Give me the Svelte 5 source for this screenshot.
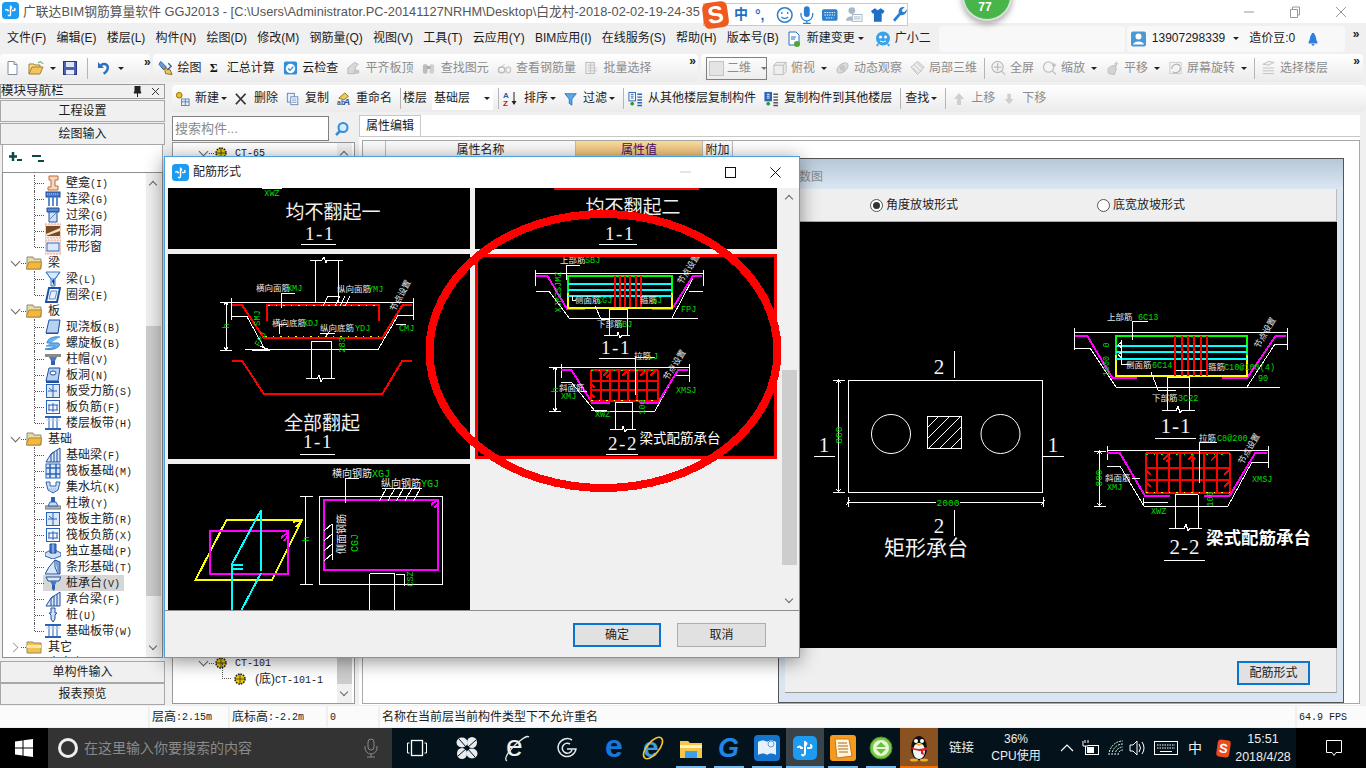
<script>
  const ICONS = {
    new: '<path d="M4 1.5h6l3 3v10H4z" fill="#fff" stroke="#7c8ea3"/><path d="M10 1.5v3h3" fill="#dfe7f0" stroke="#7c8ea3"/>',
    open: '<path d="M1 14V4h5l1 1h5v2" fill="#f7dd93" stroke="#a5802c"/><path d="M1 14l3-7h11l-3 7z" fill="#f3c55f" stroke="#a5802c"/><path d="M10 3c2-2 4-1 5 1" fill="none" stroke="#3a8a3a"/>',
    save: '<rect x="1.500" y="1.500" width="13" height="13" fill="#4c62b4" stroke="#27377c"/><rect x="4" y="2" width="8" height="5" fill="#dfe6f3"/><rect x="4" y="10" width="8" height="4.500" fill="#eef"/>',
    undo: '<path d="M4 5c5-3 9 0 7 5-1 2-2 3-4 4" fill="none" stroke="#2a6fc0" stroke-width="2.500"/><path d="M1 1.500v6.500h6.500z" fill="#2a6fc0"/>',
    draw: '<path d="M3 1l6 6-3 3-5-6z" fill="#6d9ad6" stroke="#2c5ea0"/><path d="M7 8l6 2 2 5-7-1z" fill="#e9c46a" stroke="#8a6a20"/><path d="M11 3l3 3-4 4" fill="none" stroke="#2c5ea0" stroke-width="1.500"/>',
    cloud: '<rect x="1" y="1" width="14" height="14" rx="2" fill="#2f8fdc"/><circle cx="8" cy="8.500" r="5" fill="#fff"/><path d="M5.500 8.500l2 2 3.500-4" fill="none" stroke="#2f8fdc" stroke-width="1.500"/>',
    sigma: '<text x="1" y="13" font-size="15" font-weight="700" font-family="Liberation Serif" fill="#111">Σ</text>',
    gtop: '<path d="M2 14V8l7-6 4 2-3 3v7z" fill="#d9d9d9" stroke="#b5b5b5"/><path d="M8 10h6v4H8z" fill="#c4c4c4"/>',
    gfind: '<rect x="2" y="4" width="5" height="10" rx="2" fill="#bdbdbd"/><rect x="9" y="4" width="5" height="10" rx="2" fill="#d0d0d0"/><rect x="6" y="6" width="4" height="3" fill="#aaa"/>',
    gview: '<ellipse cx="5" cy="10" rx="3.500" ry="3" fill="none" stroke="#bbb" stroke-width="1.500"/><ellipse cx="12" cy="10" rx="2.500" ry="3" fill="none" stroke="#ccc" stroke-width="1.500"/><path d="M5 7l3-3" stroke="#bbb"/>',
    gbatch: '<rect x="2" y="2" width="9" height="12" fill="#eee" stroke="#bbb"/><path d="M4 5h8M4 8h10M4 11h10M7 2v12" stroke="#c4c4c4"/>',
    top: '<path d="M2 5l3-3h10v10l-3 3H2z" fill="#eee" stroke="#bbb"/><path d="M2 5h10v10M12 5l3-3" fill="none" stroke="#bbb"/>',
    orbit: '<ellipse cx="8" cy="8" rx="7" ry="4" transform="rotate(-40 8 8)" fill="#ddd" stroke="#bbb"/><circle cx="8" cy="8" r="3" fill="#c6c6c6"/>',
    local: '<path d="M8 1l7 6-7 8-7-8z" fill="#ececec" stroke="#bbb"/><path d="M4 4l8 8M8 3l5 5M3 8l5 5" stroke="#c4c4c4"/>',
    full: '<circle cx="7" cy="7" r="6" fill="#f2f2f2" stroke="#bbb" stroke-width="1.300"/><path d="M7 3v8M3 7h8M11 11l4 4" stroke="#bbb" stroke-width="1.300"/>',
    zoom: '<circle cx="7" cy="7" r="5.500" fill="#f5f5f5" stroke="#c4c4c4" stroke-width="1.500"/><path d="M11 11l4 4M13 3v4M11 5h4" stroke="#bbb" stroke-width="1.300"/>',
    pan: '<path d="M4 14c-2-4 0-8 3-8l4-1 1 4-2 6z" fill="#d4d4d4" stroke="#bbb"/><path d="M12 1v5M10 3.500h4" stroke="#bbb"/>',
    rot: '<rect x="2" y="2" width="12" height="12" fill="#f4f4f4" stroke="#ccc"/><path d="M4 9a5 5 0 0 1 9-3M13 7a5 5 0 0 1-8 5" fill="none" stroke="#b5b5b5" stroke-width="1.300"/>',
    floor: '<path d="M2 4l6-3 6 1-6 3zM2 8h12M2 11h12M2 14h12" fill="#eee" stroke="#c0c0c0"/>',
    add: '<circle cx="4.500" cy="4" r="3" fill="#f0c020" stroke="#8a6a00"/><rect x="7" y="8" width="8" height="7" fill="#e9eff8" stroke="#5a7fb0"/><path d="M7 11h8M11 8v7" stroke="#5a7fb0"/>',
    del: '<path d="M1 2l11 12M12 2L1 14" stroke="#333" stroke-width="2"/>',
    copy: '<rect x="1.500" y="1.500" width="8" height="10" fill="#e8f0fa" stroke="#5a7fb0"/><rect x="5.500" y="5.500" width="8" height="9" fill="#fff" stroke="#5a7fb0"/><path d="M7 8h5M7 10h5M7 12h5" stroke="#7d9cc4"/>',
    ren: '<path d="M2 7l7-6 4 4-5 4z" fill="#ecc95c" stroke="#8a7020"/><text x="0" y="15" font-size="8" fill="#555" font-weight="700">ab</text><text x="7" y="15" font-size="11" font-style="italic" font-weight="700" fill="#2a5aa8">A</text>',
    sort: '<text x="0" y="7" font-size="8" font-weight="700" fill="#2a5ea8">A</text><text x="0" y="15" font-size="8" font-weight="700" fill="#b02020">Z</text><path d="M11 1v12" stroke="#222"/><path d="M8.500 10l2.500 4 2.500-4z" fill="#222"/>',
    filter: '<path d="M1 2h13L9 8v7l-3-2V8z" fill="#5fa8e8" stroke="#1f6fb8"/>',
    from: '<rect x="1" y="1" width="7" height="9" fill="#fff" stroke="#2a62b8"/><path d="M3 3h3M3 5h3M3 7h3" stroke="#2a62b8"/><path d="M4.500 11v4M2.500 13h4" stroke="#2a9a3a" stroke-width="2"/><path d="M10 3h5M10 6h5M10 9h5M10 12h5M10 15h5" stroke="#2a62b8" stroke-width="1.500"/>',
    to: '<rect x="1" y="1" width="7" height="9" fill="#2a62b8" stroke="#2a62b8"/><path d="M3 3h3M3 5h3M3 7h3" stroke="#fff"/><path d="M4.500 11v4M2.500 13h4" stroke="#2a9a3a" stroke-width="2"/><path d="M10 3h5M10 6h5M10 9h5M10 12h5M10 15h5" stroke="#555" stroke-width="1.500"/>',
    up: '<path d="M9 2L4 8h3v6h4V8h3z" fill="#cfcfcf"/>',
    down: '<path d="M7 14L2 8h3V2h4v6h3z" fill="#cfcfcf"/>',
    change: '<path d="M3 1h7l3 3v10H3z" fill="#fff" stroke="#2a6fc0"/><path d="M5 6h5M5 8h4" stroke="#2a6fc0"/><circle cx="11" cy="13" r="3" fill="#52a33a"/>',
    xiao: '<circle cx="8" cy="7.500" r="7" fill="#3aa3ea"/><circle cx="5.500" cy="6" r="1.500" fill="#fff"/><circle cx="10.500" cy="6" r="1.500" fill="#fff"/><path d="M5 10q3 2 6 0" stroke="#fff" fill="none"/><path d="M3 13l-1 2M13 13l1 2" stroke="#3aa3ea" stroke-width="2"/>',
    user: '<rect x="1" y="1" width="15" height="15" rx="2" fill="#4a98d4"/><circle cx="8.500" cy="6" r="3" fill="#fff"/><path d="M3 14c1-4 10-4 11 0z" fill="#fff"/>',
    bell: '<path d="M7 1h2l1 2c2 2 1 6 3 8v2H3v-2c2-2 1-6 3-8z" fill="#2e7ee0"/><path d="M6 14h4l-2 2z" fill="#1f5fb0"/>',
    search: '<circle cx="9" cy="6.500" r="4.500" fill="#d7ecfb" stroke="#2f8fdc" stroke-width="2"/><path d="M6 10l-4 4" stroke="#2f8fdc" stroke-width="2.500"/>',
    plus: '<path d="M5 1v9M1 5.500h8" stroke="#0a4a44" stroke-width="2.500"/><path d="M9 9h5" stroke="#0a4a44" stroke-width="2"/>',
    minus: '<path d="M1 5h9" stroke="#0a4a44" stroke-width="2"/><path d="M7 10h6" stroke="#0a4a44" stroke-width="2"/>',
    niche: '<path d="M4 1h9v4h-3v6h3v4H3v-3h3V5H4z" fill="#f6d7c0" stroke="#bd6a30"/>',
    lian: '<rect x="1" y="1" width="14" height="5" fill="#4a78c4" stroke="#1f4fa0"/><path d="M2 3h12" stroke="#bcd3ef" stroke-dasharray="1 1"/><path d="M4 6v9M12 6v9M8 6v9" stroke="#5a8ad0" stroke-width="2"/>',
    guo: '<path d="M2 1h12v4H2z" fill="#5a88cc" stroke="#1f4fa0"/><path d="M4 5h8v10H4z" fill="#cfe0f5" stroke="#1f4fa0"/><path d="M5 12l6-6" stroke="#5a88cc"/>',
    dong: '<rect x="0" y="1" width="16" height="14" fill="#f8e6de" stroke="#e0a090" stroke-dasharray="2 1"/><rect x="1" y="3" width="14" height="10" fill="#7a4a20"/><path d="M1 11l14-6v3L1 13z" fill="#f6ddc4"/>',
    chuang: '<rect x="0" y="1" width="16" height="14" fill="#f8e6de" stroke="#e0a090" stroke-dasharray="2 1"/><rect x="2" y="4" width="12" height="8" fill="#dbe8f9" stroke="#3a6ac0"/>',
    liang: '<path d="M1 1h14l-5 7v7H6V8z" fill="#d8e8fa" stroke="#3b78c8"/><path d="M1 1l5 7h4l5-7" fill="none" stroke="#3b78c8"/><path d="M7 10l2-2v6" stroke="#3b78c8"/>',
    ring: '<path d="M4 1h11l-3 14H1z" fill="#fff" stroke="#1f4fa0" stroke-width="2"/><path d="M6 4h6l-2 8H4z" fill="#e8f0fb" stroke="#5a88cc"/>',
    slab: '<path d="M4 1h11l-2 13H1z" fill="#b6d2f2" stroke="#1f4fa0"/><path d="M1 14h12l2-13v2l-2 12H1z" fill="#1f4fa0"/>',
    spiral: '<path d="M15 2C8 1 2 4 2 8h11c2 0 2 3 0 4C9 15 3 15 0 14c6-1 9-1 10-3H1" fill="#6fb3ee" stroke="#2f86d8"/>',
    cap: '<rect x="0" y="3" width="16" height="3" fill="#8a8a8a"/><path d="M4 6h8l-2 4H6z" fill="#4a78c4"/><path d="M6 10h4v4H6z" fill="#2a62b8"/>',
    hole: '<path d="M4 1h11l-2 13H1z" fill="#b6d2f2" stroke="#1f4fa0"/><ellipse cx="8" cy="6" rx="3" ry="2" fill="#fff" stroke="#1f4fa0"/><path d="M1 15h13" stroke="#1f4fa0" stroke-width="2"/>',
    rebar: '<rect x="1.500" y="1.500" width="13" height="13" fill="#dbe8f9" stroke="#2a62b8"/><path d="M8 2v12M3 8h9M4 5l4 3" stroke="#2a62b8"/>',
    neg: '<rect x="1.500" y="1.500" width="13" height="13" fill="#f2f6fd" stroke="#2a62b8"/><path d="M3 6h10M3 11h10M8 4v9M4 6v5M12 6v5" stroke="#2a62b8"/>',
    band: '<path d="M0 2h16M0 14h16" stroke="#2a62b8" stroke-width="2"/><path d="M4 3v10M8 3v10M12 3v10" stroke="#2a62b8"/><path d="M1 5h14" stroke="#bcd3ef"/>',
    fbeam: '<path d="M1 15l5-8 9-6v14z" fill="#d8e8fa" stroke="#1f4fa0"/><path d="M6 15V7l3-2v10M12 15V3" fill="none" stroke="#1f4fa0"/>',
    raft: '<rect x="1" y="1" width="14" height="14" fill="#dbe8f9" stroke="#2a62b8"/><path d="M5 1v14M11 1v14M1 5h14M1 11h14" stroke="#2a62b8" stroke-width="1.500"/>',
    pit: '<path d="M1 3h4v4h6V3h4l-2 8-5 3-5-3z" fill="#cfe0f5" stroke="#2a62b8"/><path d="M4 10h8M5 12h6" stroke="#7aa0d8" stroke-dasharray="1 1"/>',
    pier: '<path d="M0 11h16v3H0z" fill="#b5b5b5" stroke="#777"/><path d="M3 11l2-4h6l2 4z" fill="#c8daf4" stroke="#2a62b8"/><rect x="6" y="2" width="4" height="5" fill="#2a62b8"/>',
    foot: '<path d="M0 10l8-4 8 4v3l-8 3-8-3z" fill="#cfe0f5" stroke="#2a62b8"/><path d="M5 1h6v9H5z" fill="#4a78c4" stroke="#1f4fa0"/><path d="M8 1v9" stroke="#bcd3ef"/>',
    strip: '<path d="M0 15h13l-3-7V1L4 8z" fill="#d8e8fa" stroke="#1f4fa0"/><path d="M10 1l5 2v12h-2" fill="#7aa0d8" stroke="#1f4fa0"/>',
    cap2: '<path d="M1 2h15l-2 4H3z" fill="#dbe8f9" stroke="#1f4fa0"/><path d="M5 6h7l-2 4H7z" fill="#4a78c4"/><path d="M7 10h3v4l-1.500 2-1.500-2z" fill="#2a62b8"/>',
    pile: '<path d="M6 1h4v5h2l-2 2v4l-2 3-2-3V8L4 6h2z" fill="#cfe0f5" stroke="#1f4fa0"/>',
    ct: '<circle cx="8" cy="8" r="5" fill="#e8c800" stroke="#222" stroke-width="1.500" stroke-dasharray="1.600 1"/><path d="M3 8h10M8 3v10" stroke="#222" stroke-width=".7"/>',
    folder: '<path d="M1 4V2h6l1 2h7v10H1z" fill="#e9d9a6" stroke="#8f8a70"/><path d="M0 14l3-7h13l-2 7z" fill="#f5b93a" stroke="#a88a40"/>',
    folderc: '<path d="M1 3h6l1 1h7v10H1z" fill="#f5c14a" stroke="#8f8a70"/><path d="M1 6h14v3H1z" fill="#fde8a8"/>'
  };

  const row1b = [
    { i: 'draw', t: '绘图' }, { i: 'sigma', t: '汇总计算', w: 13 }, { i: 'cloud', t: '云检查' },
    { i: 'gtop', t: '平齐板顶', g: 1 }, { i: 'gfind', t: '查找图元', g: 1 }, { i: 'gview', t: '查看钢筋量', g: 1 }, { i: 'gbatch', t: '批量选择', g: 1 }
  ];
  const row1c = [
    { i: 'top', t: '俯视', g: 1, c: 1 }, { i: 'orbit', t: '动态观察', g: 1 }, { i: 'local', t: '局部三维', g: 1 }, { sep: 1 },
    { i: 'full', t: '全屏', g: 1 }, { i: 'zoom', t: '缩放', g: 1, c: 1 }, { i: 'pan', t: '平移', g: 1, c: 1 }, { i: 'rot', t: '屏幕旋转', g: 1, c: 1 }, { sep: 1 },
    { i: 'floor', t: '选择楼层', g: 1 }
  ];
  const row2a = [
    { i: 'add', t: '新建', c: 1 }, { i: 'del', t: '删除', w: 14 }, { i: 'copy', t: '复制', w: 14 }, { i: 'ren', t: '重命名', w: 14 }
  ];
  const row2b = [
    { i: 'sort', t: '排序', w: 16, c: 1 }, { i: 'filter', t: '过滤', w: 14, c: 1 }, { sep: 1 },
    { i: 'from', t: '从其他楼层复制构件' }, { i: 'to', t: '复制构件到其他楼层' }, { sep: 1 },
    { t: '查找', c: 1 }, { sep: 1 }, { i: 'up', t: '上移', w: 16, g: 1 }, { i: 'down', t: '下移', w: 14, g: 1 }
  ];
  const menus = ['文件(F)', '编辑(E)', '楼层(L)', '构件(N)', '绘图(D)', '修改(M)', '钢筋量(Q)', '视图(V)', '工具(T)', '云应用(Y)', 'BIM应用(I)', '在线服务(S)', '帮助(H)', '版本号(B)'];

  const tree = [
    { k: 'niche', t: '壁龛(I)', c: 1 }, { k: 'lian', t: '连梁(G)', c: 1 }, { k: 'guo', t: '过梁(G)', c: 1 }, { k: 'dong', t: '带形洞', c: 1 }, { k: 'chuang', t: '带形窗', c: 1, last: 1 },
    { r: 1, t: '梁' }, { k: 'liang', t: '梁(L)', c: 1 }, { k: 'ring', t: '圈梁(E)', c: 1, last: 1 },
    { r: 1, t: '板' }, { k: 'slab', t: '现浇板(B)', c: 1 }, { k: 'spiral', t: '螺旋板(B)', c: 1 }, { k: 'cap', t: '柱帽(V)', c: 1 }, { k: 'hole', t: '板洞(N)', c: 1 }, { k: 'rebar', t: '板受力筋(S)', c: 1 }, { k: 'neg', t: '板负筋(F)', c: 1 }, { k: 'band', t: '楼层板带(H)', c: 1, last: 1 },
    { r: 1, t: '基础' }, { k: 'fbeam', t: '基础梁(F)', c: 1 }, { k: 'raft', t: '筏板基础(M)', c: 1 }, { k: 'pit', t: '集水坑(K)', c: 1 }, { k: 'pier', t: '柱墩(Y)', c: 1 }, { k: 'rebar', t: '筏板主筋(R)', c: 1 }, { k: 'neg', t: '筏板负筋(X)', c: 1 }, { k: 'foot', t: '独立基础(P)', c: 1 }, { k: 'strip', t: '条形基础(T)', c: 1 }, { k: 'cap2', t: '桩承台(V)', c: 1, sel: 1 }, { k: 'fbeam', t: '承台梁(F)', c: 1 }, { k: 'pile', t: '桩(U)', c: 1 }, { k: 'band', t: '基础板带(W)', c: 1, last: 1 },
    { r: 2, t: '其它' }, { r: 2, t: '自定义' }
  ];

  const segs = (s) => s.match(/[\x00-\x7f]+|[^\x00-\x7f]+/g) ?? [];
  const isLatin = (s) => /^[\x00-\x7f]/.test(s);

  const rowTicks = (x0, y0, n, dx, dy, len = 5) => {
    let d = '';
    for (let i = 0; i < n; i++) d += `M${x0 + i * dx} ${y0 + i * dy}l-${len * 0.55} ${len}`;
    return d;
  };
  const gridD = (xs, ys) =>
    xs.map((x) => `M${x} ${ys[0]}V${ys[ys.length - 1]}`).join('') + ys.map((y) => `M${xs[0]} ${y}H${xs[xs.length - 1]}`).join('');
  const hatch = (x1, y1, x2, y2, step) => {
    let d = '';
    for (let c = x1 - (y2 - y1) + step; c < x2; c += step) {
      const a = Math.max(c, x1), b = Math.min(c + (y2 - y1), x2);
      d += `M${a} ${y2 - (a - c)}L${b} ${y2 - (b - c)}`;
    }
    return d;
  };
</script>

{#snippet icon(name, w = 15, h = 16)}
  <svg class="ic" width={w} height={h} viewBox="0 0 {Math.max(w, 16)} 16">{@html ICONS[name]}</svg>
{/snippet}

{#snippet latin(s)}
  {#each segs(s) as p}{#if isLatin(p)}<span class="m">{p}</span>{:else}{p}{/if}{/each}
{/snippet}

{#snippet tools(list)}
  {#each list as it}
    {#if it.sep}<i class="sep"></i>{:else}
      <span class="tool" class:grey={it.g}>
        {#if it.i}{@render icon(it.i, it.w ?? 15)}{/if}
        <span>{it.t}</span>
        {#if it.c}<i class="caret"></i>{/if}
      </span>
    {/if}
  {/each}
{/snippet}

{#snippet dimV(x, y1, y2)}
  <path class="w" d="M{x} {y1}V{y2}M{x - 6} {y1}h12M{x - 6} {y2}h12M{x - 2} {y1 + 3}l2-3 2 3M{x - 2} {y2 - 3}l2 3 2-3" />
{/snippet}

{#snippet appLogo()}
  <svg width="17" height="17" viewBox="0 0 24 24"><rect width="24" height="24" rx="5" fill="#1c9bf0" /><path d="M12 5v12c0 3-3 3-3 1M5 12c0-2 3-2 3 0h2M14 12h3c2 0 2-3 0-3M12 7c2-1 2 2 0 2" fill="none" stroke="#fff" stroke-width="2" /></svg>
{/snippet}

<div class="screen">
  <header class="title">
    <span class="tlogo">{@render appLogo()}</span>
    <span class="ttext">广联达BIM钢筋算量软件 GGJ2013 - [C:\Users\Administrator.PC-20141127NRHM\Desktop\白龙村-2018-02-02-19-24-35</span>
    <span class="wins">
      <svg width="12" height="12" viewBox="0 0 12 12"><path d="M1 6h10" stroke="#999" /></svg>
      <svg width="12" height="12" viewBox="0 0 12 12"><path d="M1.500 3.500h7v8h-7zM3.500 3.500v-2.500h7v8h-2" fill="none" stroke="#999" /></svg>
      <svg width="12" height="12" viewBox="0 0 12 12"><path d="M1 1l10 10M11 1L1 11" stroke="#999" /></svg>
    </span>
  </header>

  <nav class="menu">
    <div class="mitems">{#each menus as m}<span>{m}</span>{/each}</div>
    <span class="mtool">{@render icon('change', 16)}新建变更<i class="caret"></i></span>
    <span class="mtool xiao">{@render icon('xiao', 16)}广小二</span>
    <span class="mblank"></span>
    <div class="muser">
      {@render icon('user', 17, 17)}
      <span>13907298339</span><i class="caret"></i>
      <span class="dou">造价豆:0</span>
      {@render icon('bell', 14, 16)}
    </div>
    <b class="more">»</b>
  </nav>

  <div class="row1">
    <div class="bar a">
      {@render icon('new', 16)}
      {@render icon('open', 16)}
      <i class="caret"></i>
      {@render icon('save', 16)}
      <i class="sep"></i>
      {@render icon('undo', 15)}
      <i class="caret"></i>
      <b class="more">»</b>
    </div>
    <div class="bar b">
      {@render tools(row1b)}
      <b class="more">»</b>
    </div>
    <div class="bar c">
      <span class="dd"><i class="sq"></i><span>二维</span><i class="caret"></i></span>
      {@render tools(row1c)}
      <b class="more">»</b>
    </div>
  </div>

  <div class="work">
    <aside class="nav">
      <div class="navhead">
        <span>模块导航栏</span>
        <span class="navbtns">
          <svg width="9" height="11" viewBox="0 0 9 11"><path d="M2 0h5v5l1 2H1l1-2zM4.500 7v4" fill="#222" stroke="#222" /></svg>
          <svg width="9" height="9" viewBox="0 0 9 9"><path d="M1 1l7 7M8 1L1 8" stroke="#333" /></svg>
        </span>
      </div>
      <div class="navbtn">工程设置</div>
      <div class="navbtn">绘图输入</div>
      <div class="pm">{@render icon('plus', 16, 16)}{@render icon('minus', 16, 16)}</div>
      <div class="treebox">
        <div class="tree">
          {#each tree as n}
            <div class="row" class:child={n.c} class:lastc={n.last} class:root={n.r} class:sel={n.sel}>
              {#if n.r}
                <i class={n.r === 1 ? 'chev open' : 'chev closed'}></i>
                <span class="dot"></span>
                {@render icon(n.r === 1 ? 'folder' : 'folderc', 16, 16)}
                <span class="rlabel">{n.t}</span>
              {:else}
                {@render icon(n.k, 16, 16)}
                <span class="clabel">{@render latin(n.t)}</span>
              {/if}
            </div>
          {/each}
        </div>
        <div class="scroll ts">
          <i class="ar up"></i><i class="thumb"></i><i class="ar down"></i>
        </div>
      </div>
      <div class="navbtn">单构件输入</div>
      <div class="navbtn last">报表预览</div>
    </aside>

    <div class="mid">
      <div class="bar row2">
        {@render tools(row2a)}
        <i class="sep"></i>
        <span class="flo">楼层</span>
        <span class="combo">基础层<i class="caret"></i></span>
        <i class="sep"></i>
        {@render tools(row2b)}
      </div>
      <div class="midbody">
        <section class="list">
          <div class="search">
            <span class="sinput">搜索构件...</span>
            <span class="sbtn">{@render icon('search', 16)}</span>
          </div>
          <div class="listbox">
            <div class="items">
              <div class="item first"><i class="chev open"></i><span class="dot"></span>{@render icon('ct', 16)}<span class="m">CT-65</span></div>
              <div class="spacer"></div>
              <div class="item"><i class="chev open"></i><span class="dot"></span>{@render icon('ct', 16)}<span class="m">CT-101</span></div>
              <div class="item sub"><span class="elbow"></span>{@render icon('ct', 16)}<span class="subl">(底)<span class="m">CT-101-1</span></span></div>
            </div>
            <div class="scroll ls">
              <i class="ar up"></i><i class="thumb"></i><i class="ar down"></i>
            </div>
          </div>
        </section>
        <section class="props">
          <div class="tabline"><span class="tab">属性编辑</span></div>
          <div class="table">
            <div class="thead">
              <span class="th c0"></span><span class="th c1">属性名称</span><span class="th c2">属性值</span><span class="th c3">附加</span>
            </div>
          </div>
        </section>
      </div>
    </div>
  </div>

  <footer class="status">
    <span class="s0"></span>
    <span class="s1">{@render latin('层高:2.15m')}</span>
    <span class="s2">{@render latin('底标高:-2.2m')}</span>
    <span class="s3"><span class="m">0</span></span>
    <span class="s4">名称在当前层当前构件类型下不允许重名</span>
    <span class="s5"><span class="m">64.9 FPS</span></span>
  </footer>

  <div class="taskbar">
    <div class="start">
      <svg width="18" height="18" viewBox="0 0 18 18"><path d="M0 2.500l7.500-1v7H0zM8.500 1.300L18 0v8.500H8.500zM0 9.500h7.500v7l-7.500-1zM8.500 9.500H18V18l-9.500-1.300z" fill="#fff" /></svg>
    </div>
    <div class="tsearch">
      <svg width="22" height="22" viewBox="0 0 22 22"><circle cx="11" cy="11" r="8.500" fill="none" stroke="#eee" stroke-width="3" /></svg>
      <span class="tstext">在这里输入你要搜索的内容</span>
      <svg class="mic" width="14" height="20" viewBox="0 0 14 20"><rect x="4" y="1" width="6" height="11" rx="3" fill="none" stroke="#8a8a8a" /><path d="M1 8v2a6 6 0 0 0 12 0V8M7 16v3M3 19h8" fill="none" stroke="#8a8a8a" /></svg>
    </div>
    <div class="big">
      <svg width="20" height="18" viewBox="0 0 20 18"><rect x="4.500" y="1.500" width="11" height="15" fill="none" stroke="#fff" stroke-width="1.300" /><path d="M2.500 4H.5v10h2M17.500 4h2v10h-2" fill="none" stroke="#fff" /></svg>
    </div>
    <div class="big">
      <svg width="24" height="24" viewBox="0 0 24 24"><g fill="#e8ecee"><ellipse cx="7" cy="6.500" rx="5.500" ry="5" /><ellipse cx="17" cy="6.500" rx="5" ry="5.500" /><ellipse cx="7" cy="17.500" rx="5" ry="5.500" /><ellipse cx="17" cy="17.500" rx="5.500" ry="5" /></g><circle cx="12" cy="12" r="2" fill="#04141c" /><path d="M12 12L4 3M12 12l9-8M12 12l-9 8M12 12l8 9" stroke="#04141c" /></svg>
    </div>
    <div class="big">
      <svg width="28" height="30" viewBox="0 0 28 30"><text x="3" y="23" font-size="30" font-family="Liberation Sans" fill="#f0f0f0">e</text><path d="M4 28c-4-2 2-10 9-17 7-6 11-9 13-7" fill="none" stroke="#dfe6ea" stroke-width="1.300" /></svg>
    </div>
    <div class="big">
      <svg width="22" height="22" viewBox="0 0 22 22"><path d="M16 3A9 9 0 1 0 20 12H11M14 7a5 5 0 1 0 2 6" fill="none" stroke="#e6eaec" stroke-width="1.500" /></svg>
    </div>
    <div class="apps">
      <span class="app"><svg width="30" height="30" viewBox="0 0 30 30"><text x="5" y="24" font-size="32" font-weight="700" font-family="Liberation Sans" fill="#1976d9">e</text></svg></span>
      <span class="app"><svg width="30" height="30" viewBox="0 0 30 30"><text x="5" y="24" font-size="28" font-weight="700" font-family="Liberation Sans" fill="#3b9be5">e</text><ellipse cx="15" cy="15" rx="13" ry="6" transform="rotate(-50 15 15)" fill="none" stroke="#f3c72e" stroke-width="1.600" /></svg></span>
      <span class="app on"><svg width="24" height="22" viewBox="0 0 24 22"><path d="M1 4h8l2 2h12v15H1z" fill="#f4c649" /><path d="M1 8h22v3H1z" fill="#fff3c4" /><rect x="6" y="14" width="12" height="7" fill="#3aa0e8" /></svg></span>
      <span class="app on"><svg width="28" height="30" viewBox="0 0 28 30"><text x="3" y="24" font-size="27" font-style="italic" font-weight="700" font-family="Liberation Sans" fill="#1d86ea">G</text></svg></span>
      <span class="app on"><svg width="26" height="26" viewBox="0 0 26 26"><rect width="26" height="26" rx="4" fill="#1574cc" /><path d="M4 7c3-2 7-2 9 0 2-2 6-2 9 0v13c-3-2-7-2-9 0-2-2-6-2-9 0z" fill="#e6f1fb" /><circle cx="17" cy="9" r="3" fill="none" stroke="#5fa0e0" /></svg></span>
      <span class="app active on"><svg width="24" height="24" viewBox="0 0 24 24"><rect width="24" height="24" rx="5" fill="#1c9bf0" /><path d="M12 5v12c0 3-3 3-3 1M5 12c0-2 3-2 3 0h2M14 12h3c2 0 2-3 0-3M12 7c2-1 2 2 0 2" fill="none" stroke="#fff" stroke-width="2" /></svg></span>
      <span class="app on"><svg width="26" height="26" viewBox="0 0 26 26"><rect width="26" height="26" rx="3" fill="#f59a1c" /><path d="M5 4h14l3 17-15 2z" fill="#fff6df" stroke="#c8761a" /><path d="M8 8h9M8 11h10M8 14h10M9 17h9" stroke="#b0641a" /></svg></span>
      <span class="app on"><svg width="26" height="28" viewBox="0 0 26 28"><circle cx="13" cy="14" r="11" fill="#7ac84a" stroke="#3a8a20" /><ellipse cx="13" cy="14" rx="8" ry="8" fill="#eaf6d8" /><path d="M8 13h10l-5-5zM8 15h10l-5 5z" fill="#6abf3c" /></svg></span>
      <span class="app qq"><svg width="22" height="28" viewBox="0 0 22 28"><ellipse cx="11" cy="14" rx="8" ry="12" fill="#111" /><ellipse cx="11" cy="17" rx="6" ry="8" fill="#f5f5f5" /><circle cx="8" cy="7" r="2" fill="#fff" /><circle cx="14" cy="7" r="2" fill="#fff" /><path d="M7 10h8l-4 2z" fill="#f0b020" /><path d="M3 13q8 4 16 0l1 2q-3 2-5 2l1 4-3-1v-3q-3 0-9-2z" fill="#d8202a" /><ellipse cx="6" cy="26" rx="4" ry="1.500" fill="#f0b020" /><ellipse cx="16" cy="26" rx="4" ry="1.500" fill="#f0b020" /></svg></span>
    </div>
    <span class="link">链接</span>
    <div class="cpu"><span>36%</span><span>CPU使用</span></div>
    <div class="tray">
      <svg width="14" height="14" viewBox="0 0 14 14"><path d="M1 10l6-6 6 6" fill="none" stroke="#fff" stroke-width="1.200" /></svg>
      <svg width="18" height="16" viewBox="0 0 18 16"><rect x="3.500" y="5.500" width="13" height="9" fill="none" stroke="#fff" /><rect x="5" y="7" width="7" height="6" fill="#fff" /><path d="M1 1v5h5M3 0v3M6 0v3" stroke="#fff" /></svg>
      <svg width="18" height="16" viewBox="0 0 18 16"><path d="M1 15A14 14 0 0 1 15 1M4 15A11 11 0 0 1 15 4M7 15A8 8 0 0 1 15 7M10 15A5 5 0 0 1 15 10" fill="none" stroke="#dfe" stroke-dasharray="2 1" /></svg>
      <svg class="vol" width="18" height="16" viewBox="0 0 18 16"><path d="M1 5h3l4-4v14l-4-4H1zM10 4q3 4 0 8M13 2q4 6 0 12" fill="none" stroke="#fff" /></svg>
      <svg class="kbd" width="24" height="14" viewBox="0 0 24 14"><rect x=".5" y=".5" width="23" height="13" fill="none" stroke="#fff" /><path d="M3 4h18M3 7h18" stroke="#fff" stroke-dasharray="1.500 1" /><path d="M6 10.500h12" stroke="#fff" /></svg>
      <span class="zh">中</span>
      <span class="tS">S</span>
    </div>
    <div class="clock"><span>15:51</span><span>2018/4/28</span></div>
    <div class="notify">
      <svg width="16" height="17" viewBox="0 0 16 17"><path d="M.5.500h15v12H10l-2 3-2-3H.5z" fill="none" stroke="#fff" /></svg>
    </div>
  </div>

  <!-- property-drawing window behind the dialog -->
  <div class="back">
    <div class="btitle"><span>数图</span></div>
    <div class="binner">
      <div class="radios">
        <span class="radio on"><i></i>角度放坡形式</span>
        <span class="radio"><i></i>底宽放坡形式</span>
      </div>
      <svg class="cad" width="552" height="426" viewBox="785 222 552 426" shape-rendering="crispEdges">
        <rect class="w" x="848.500" y="380.500" width="194" height="112" />
        <circle class="w geo" cx="891" cy="434" r="19.500" />
        <circle class="w geo" cx="1000.500" cy="434" r="19.500" />
        <rect class="w" x="927.500" y="416.500" width="34" height="32" />
        <path class="w" d={hatch(927.5, 416.5, 961.5, 448.5, 11)} />
        {@render dimV(838.5, 380, 492)}
        <text class="gt r" transform="translate(842 435) rotate(-90)" text-anchor="middle">800</text>
        <path class="w" d="M848.500 502.500H1043.500M848.500 497v10M1043.500 497v10M846 505l4-5M1041 505l4-5" />
        <rect x="936" y="498" width="24" height="9" fill="#000" />
        <text class="gt r" x="948" y="506" text-anchor="middle">2000</text>
        <text class="num" x="824" y="452" text-anchor="middle">1</text>
        <path class="w" d="M814 456.500h21M1043 456.500h21" />
        <text class="num" x="1053" y="452" text-anchor="middle">1</text>
        <text class="num" x="939" y="374" text-anchor="middle">2</text>
        <path class="w" d="M954.500 351v27M954.500 510v26" />
        <text class="num" x="939" y="533" text-anchor="middle">2</text>
        <text class="big-t" x="926" y="555" text-anchor="middle">矩形承台</text>

        <path class="w" d="M1074.500 332.500H1287.500M1074.500 328v22M1287.500 328v22M1075 348h15l26 39H1280M1247 387l28-43h12" />
        <path class="w" d="M1167.500 377v33M1189.500 377v33M1162 410.500h14l2-4 2 6 2-2h13M1167.500 377.500h22" />
        <polyline class="mg" points="1075,335.500 1087,335.500 1112,377.500 1137,377.500" />
        <polyline class="mg" points="1222,377.500 1247.500,377.500 1276,335.500 1286,335.500" />
        <polyline class="gn" points="1116,355 1116,335.500 1247,335.500 1247,355" />
        <polyline class="yl" points="1116,355 1116,375.500 1247,375.500 1247,355" />
        <path class="cy" d="M1116 345.500h131M1116 351.500h131M1116 358.500h131" />
        <path class="rd" d="M1175 336v40M1181.500 336v40M1188 336v40M1194 336v40M1201 336v40M1207 336v40" />
        <path class="w" d="M1148 321.500h-16v18M1121 340v24h10M1122 342l-4 3 4 3M1122 352l-4 3 4 3M1151 372l7 18h18M1176 370h30" />
        <text class="lb" x="1107" y="320">上部筋</text><text class="gt" x="1138" y="320">6C13</text>
        <text class="lb" x="1126" y="368">侧面筋</text><text class="gt" x="1152" y="368">6C14</text>
        <text class="lb" x="1208" y="370">箍筋</text><text class="gt" x="1224" y="370">C10@100(4)</text>
        <text class="lb" x="1152" y="401">下部筋</text><text class="gt" x="1178" y="401">3C22</text>
        <text class="gt" x="1258" y="381">90</text>
        <text class="gt" transform="translate(1109 345) rotate(-90)" text-anchor="middle">0</text>
        <text class="gt" transform="translate(1109 366) rotate(-90)" text-anchor="middle">1000</text>
        <text class="lb" transform="translate(1259 349) rotate(-60)">节点设置</text>
        <text class="num sp" x="1176" y="433" text-anchor="middle">1-1</text>
        <path class="w" d="M1155 438.500h41" />

        <path class="w" d="M1107 450.500H1269M1107 446v14M1268 446v22M1107 466h13l24 40H1228l24-44h17" />
        {@render dimV(1099.5, 451, 506)}
        <text class="gt r" transform="translate(1102 478) rotate(-90)" text-anchor="middle">800</text>
        <path class="w" d="M1175.500 495v33M1198.500 495v33M1169 528.500h15l2-4 2 6 2-2h12M1175 494.500h23" />
        <polyline class="mg" points="1107,452.500 1119.500,452.500 1145,496 1170,496" />
        <polyline class="mg" points="1204,496 1229.500,496 1255.500,452.500 1267,452.500" />
        <path class="rd" d={gridD([1146, 1157, 1169, 1180, 1193, 1204, 1217, 1229.5], [453, 468, 480, 493])} />
        <path class="rd thin" d="M1163 460l5-5M1166 462l4-4M1188 460l5-5M1191 462l4-4M1211 460l6-5M1146 470l5 5M1146 482l5 5M1229 470l-5 5M1229 482l-5 5" />
        <path class="yl dots" d="M1146 492H1230" />
        <path class="gn dots" d="M1146 454H1230" />
        <path class="w" d="M1217 442.500h-17.500V483M1132 478h8M1143 502h25M1143 498v8" />
        <text class="lb" x="1199" y="441">拉筋</text><text class="gt" x="1217" y="441">C8@200</text>
        <text class="lb" x="1105" y="481">斜面筋</text><text class="gt" x="1107" y="490">XMJ</text>
        <text class="gt" x="1252" y="482">XMSJ</text><text class="gt" x="1151" y="514">XWZ</text>
        <text class="gt" transform="translate(1213 499) rotate(-90)" text-anchor="middle">100</text>
        <text class="lb" transform="translate(1243 465) rotate(-60)">节点设置</text>
        <text class="num sp" x="1185" y="554" text-anchor="middle">2-2</text>
        <path class="w" d="M1164 560.500h41" />
        <text class="cap-t" x="1258.500" y="544" text-anchor="middle">梁式配筋承台</text>
      </svg>
      <div class="bfoot"><span class="btn primary">配筋形式</span></div>
    </div>
  </div>

  <!-- 配筋形式 dialog -->
  <div class="dialog">
    <div class="dtitle">
      <span class="dlogo">{@render appLogo()}</span>
      <span>配筋形式</span>
      <span class="dwins">
        <svg width="14" height="12" viewBox="0 0 14 12"><path d="M1 6h11" stroke="#ccc" /></svg>
        <svg width="11" height="11" viewBox="0 0 11 11"><rect x=".5" y=".5" width="10" height="10" fill="none" stroke="#111" /></svg>
        <svg class="dclose" width="11" height="11" viewBox="0 0 11 11"><path d="M.5.500l10 10M10.500.500l-10 10" stroke="#111" /></svg>
      </span>
    </div>
    <div class="dbody">
      <div class="cards">
        <svg class="card" width="302" height="61" viewBox="168 188 302 61" shape-rendering="crispEdges">
          <path class="w" d="M262 188h20" />
          <text class="gt" x="272" y="196" text-anchor="middle">XWZ</text>
          <text class="t18" x="333" y="219" text-anchor="middle">均不翻起一</text>
          <text class="n18" x="320" y="240" text-anchor="middle">1-1</text>
          <path class="w" d="M301 244.500h35" />
        </svg>
        <svg class="card" width="302" height="61" viewBox="475 188 302 61" shape-rendering="crispEdges">
          <path class="rd" d="M555 188v1h143v-1" />
          <text class="t18" x="633" y="214" text-anchor="middle">均不翻起二</text>
          <text class="n18" x="620" y="240" text-anchor="middle">1-1</text>
          <path class="w" d="M599 244.500h38" />
        </svg>

        <svg class="card" width="302" height="205" viewBox="168 254 302 205" shape-rendering="crispEdges">
          <path class="w" d="M315 302V260M338 302V260M310 260h12l2-3 2 6 1-3h16M231.500 302.500H413.500M231.500 298v22M413.500 298v22" />
          {@render dimV(226, 302, 350)}
          <text class="gt" transform="translate(229 326) rotate(-90)" text-anchor="middle">h</text>
          <path class="w" d="M232 316.500h15l18 33H378l20-34 15 .5M245 349.500H378" />
          <polyline class="rd" points="232,305 242,305 263.500,337.500 382.500,337.500 402.500,305 412,305" />
          <polyline class="rd" points="267,321 267,305 379,305 379,321" />
          <path class="yl dots" d="M268 305.500H378M265 336.500H382" />
          <path class="w" d="M311.500 341v37M331 341v37M311 341.500h20M306 378.500h11l2-3 2 6 2-3h12" />
          <polyline class="rd" points="232,360.500 242,360.500 263.500,393.500 382.500,393.500 402.500,360.500 412,360.500" />
          <path class="w" d="M295 293h-14v15M287 324h-8v10M340 296h-12l-5 10M340 296l-5 10M345 296l-5 10M350 296l-5 10M335 333h-15M330 331l-5 6" />
          <path class="w" d="M260 346l10 4h-18M396 324h10" />
          <text class="lb" x="256" y="291">横向面筋</text><text class="gt" x="287" y="291">XMJ</text>
          <text class="lb" x="337" y="292">纵向面筋</text><text class="gt" x="368" y="292">YMJ</text>
          <text class="lb" x="272" y="326">横向底筋</text><text class="gt" x="303" y="326">XDJ</text>
          <text class="lb" x="320" y="331">纵向底筋</text><text class="gt" x="355" y="331">YDJ</text>
          <text class="gt" x="399" y="331">CMJ</text>
          <text class="gt" transform="translate(259 347) rotate(-60)">FPJ</text>
          <text class="gt" transform="translate(260 318) rotate(-90)" text-anchor="middle">SMJ</text>
          <text class="gt" transform="translate(345 345) rotate(-90)" text-anchor="middle">283</text>
          <text class="lb" transform="translate(395 312) rotate(-62)">节点设置</text>
          <text class="t18" x="322" y="430" text-anchor="middle">全部翻起</text>
          <text class="n18" x="318" y="448" text-anchor="middle">1-1</text>
          <path class="w" d="M300 454.500h35" />
        </svg>

        <div class="picked">
          <svg width="296" height="199" viewBox="478 257 296 199" shape-rendering="crispEdges">
            <path class="w" d="M535 273.500H703M535 270v16M703 270v16M536 291h13l20 27H698M672 318l21-40M703 291h-14" />
            <polyline class="mg" points="536,276 547.500,276 567,309 585,309" />
            <polyline class="mg" points="652,309 672,309 693,276 702,276" />
            <polyline class="gn" points="568,293 568,276 672,276 672,293" />
            <polyline class="yl" points="568,293 568,308 672,308 672,293" />
            <path class="cy" d="M568 283.500h104M568 289.500h104M568 295.500h104" />
            <path class="rd" d="M614.500 276v31M620 276v31M625 276v31M630 276v31M636 276v31M641 276v31" />
            <path class="w" d="M609.500 309v26M627 309v26M604 335.500h13l1-3 2 5 2-2h8M609 309.500h18M580 265h-14v15M572 296v4h4M595 306l6 13h8" />
            <text class="lb" x="560" y="263">上部筋</text><text class="gt" x="585" y="263">SBJ</text>
            <text class="lb" x="575" y="303">侧面筋</text><text class="gt" x="597" y="303">CGJ</text>
            <text class="lb" x="640" y="303">箍筋</text><text class="gt" x="652" y="303">GJ</text>
            <text class="lb" x="597" y="327">下部筋</text><text class="gt" x="617" y="327">XBJ</text>
            <text class="gt" x="681" y="312">FPJ</text>
            <text class="gt" transform="translate(561 292) rotate(-90)" text-anchor="middle">XJMZSJMZ</text>
            <text class="lb" transform="translate(682 285) rotate(-58)">节点设置</text>
            <text class="n18" x="616" y="354" text-anchor="middle">1-1</text>
            <path class="w" d="M599 358.500h37" />

            <path class="w" d="M561 367.500H689M561 364v14M689 364v18M561 382h10l24 29H655l20-36h14M555 367.500h0" />
            {@render dimV(555, 367, 411)}
            <text class="gt" transform="translate(558 390) rotate(-90)" text-anchor="middle">h</text>
            <polyline class="mg" points="561,369.500 571,369.500 592,402.500 610,402.500" />
            <polyline class="mg" points="640,402.500 658,402.500 678.500,369.500 688,369.500" />
            <path class="rd" d={gridD([591, 601, 609.5, 618.5, 627.5, 637, 647, 657.500], [369.5, 381, 390, 401])} />
            <path class="rd thin" d="M603 376l5-5M606 378l4-4M622 376l5-5M640 376l5-5M650 376l5-5M591 384l4 4M591 394l4 4" />
            <path class="w" d="M615.500 402v27M632.500 402v27M610 429.500h12l1-3 2 5 2-2h9M615 402.500h18M655 357h-20v38M581 391h6M591 410h16" />
            <path class="yl dots" d="M591 400H657" />
            <path class="gn dots" d="M591 370H657" />
            <text class="lb" x="634" y="359">拉筋</text><text class="gt" x="648" y="359">LJ</text>
            <text class="lb" x="559" y="391">斜面筋</text><text class="gt" x="561" y="399">XMJ</text>
            <text class="gt" x="676" y="393">XMSJ</text><text class="gt" x="595" y="417">XWZ</text>
            <text class="gt" transform="translate(645 407) rotate(-90)" text-anchor="middle">100</text>
            <text class="lb" transform="translate(668 381) rotate(-58)">节点设置</text>
            <text class="n18" x="623" y="450" text-anchor="middle">2-2</text>
            <path class="w" d="M606 454.500h32" />
            <text class="cap-s" x="680" y="443" text-anchor="middle">梁式配筋承台</text>
          </svg>
        </div>

        <svg class="card" width="302" height="146" viewBox="168 464 302 146" shape-rendering="crispEdges">
          <polygon class="yl" points="226.500,520 302,520 272,580 195.500,580" />
          <rect class="mg" x="210" y="531" width="78" height="43" />
          <path class="mg" d="M281 538l7-6M284 541l4-5" />
          <path class="yl" d="M293 522l9-2M296 527l6-7" />
          <path class="cy" d="M261 510V571M261 510L231.500 565V610M231.500 565h11M231.500 569h11M261 573L241.500 610" />
          <path class="w" d="M305.500 496V584M300 496.500h13M300 584.500h13" />
          <text class="gt" transform="translate(309 539) rotate(-90)" text-anchor="middle">h</text>
          <rect class="w" x="319.500" y="496.500" width="123" height="88" />
          <rect class="mg" x="324" y="500" width="114" height="70" />
          <path class="w" d="M369.500 573.500V610M394.500 573.500V610M369.500 573.500h25" />
          <path class="w" d="M359 478.500h-14V503" />
          <path class="w" d="M381.500 488.500h40" />
          <path class="w" d={rowTicks(386, 489, 5, 8.5, 0, 12)} />
          <path class="w" d="M332 524v36M324 531l8-7M324 541l8-7M324 551l8-7M324 561l8-7" />
          <path class="mg" d="M431 505l6-5M434 508l4-4" />
          <path class="w" d="M404 574h-8M404 574v12" />
          <text class="lb11" x="332" y="477">横向钢筋</text><text class="gt11" x="372" y="477">XGJ</text>
          <text class="lb11" x="381" y="487">纵向钢筋</text><text class="gt11" x="421" y="487">YGJ</text>
          <text class="lb11" transform="translate(345 534) rotate(-90)" text-anchor="middle">侧面钢筋</text>
          <text class="gt11" transform="translate(358 543) rotate(-90)" text-anchor="middle">CGJ</text>
          <text class="gt" transform="translate(413 579) rotate(-90)" text-anchor="middle">CSZ</text>
        </svg>
      </div>
      <div class="scroll ds">
        <i class="ar up"></i><i class="thumb"></i><i class="ar down"></i>
      </div>
    </div>
    <div class="dfoot">
      <span class="btn primary ok">确定</span>
      <span class="btn cancel">取消</span>
    </div>
  </div>

  <svg class="circle" width="1366" height="768" viewBox="0 0 1366 768" shape-rendering="crispEdges">
    <ellipse cx="603.500" cy="351" rx="174" ry="137" fill="none" stroke="#f00" stroke-width="8" />
  </svg>

  <div class="badge"><span>77</span></div>

  <div class="sogou">
    <span class="slogo">S</span>
    <b class="szh">中</b>
    <span class="spunct">°,</span>
    <svg width="18" height="18" viewBox="0 0 18 18"><circle cx="9" cy="9" r="7.500" fill="#fff" stroke="#2a7fd0" stroke-width="1.600" /><path d="M6 6v2M12 6v2M5.500 11q3.500 3 7 0" fill="none" stroke="#2a7fd0" stroke-width="1.300" /></svg>
    <svg width="14" height="18" viewBox="0 0 14 18"><rect x="4" y="0" width="6" height="11" rx="3" fill="#2a7fd0" /><path d="M1 7v2a6 6 0 0 0 12 0V7M7 15v2M3 17.500h8" fill="none" stroke="#2a7fd0" stroke-width="1.300" /></svg>
    <svg width="18" height="16" viewBox="0 0 18 16"><rect x="1" y="2" width="16" height="12" rx="2" fill="#2a7fd0" /><path d="M3.500 5.500h11M3.500 8h11M5 11h8" stroke="#fff" stroke-dasharray="1.500 1" /></svg>
    <svg width="18" height="18" viewBox="0 0 18 18"><circle cx="7" cy="4.500" r="3.500" fill="#a8b8c8" /><path d="M1 15c0-6 10-6 10 0z" fill="#a8b8c8" /><rect x="7.500" y="8.500" width="10" height="7" fill="#fff" stroke="#a8b8c8" /><path d="M9 11h7M9 13h7" stroke="#a8b8c8" /></svg>
    <svg width="16" height="16" viewBox="0 0 16 16"><path d="M5 1l3 2 3-2 4 3-2 3-1-1v9H4V6L3 7 1 4z" fill="#1f6fc4" /></svg>
    <svg width="15" height="17" viewBox="0 0 15 17"><path d="M1 14L7 7C6 3 9 0 13 1l-3 3 1 2 2 0 2-3c1 4-3 7-6 6l-6 7z" fill="#2a7fd0" /></svg>
  </div>
</div>

<style>
  :global(body) { margin: 0; background: #f0f0f0; overflow: hidden; }
  .screen {
    position: relative; width: 1366px; height: 768px; overflow: hidden; display: flex; flex-direction: column;
    background: #f0f0f0; color: #1c1c1c; font: 12px/1.2 "Liberation Sans", "Noto Sans CJK SC", sans-serif;
  }
  .ic { display: block; flex: none; }
  .m { font: 10px "Liberation Mono", monospace; }
  i { display: block; font-style: normal; }
  .caret { width: 0; height: 0; border: 3px solid transparent; border-top: 3px solid #222; border-bottom: 0; flex: none; }
  .sep { width: 1px; height: 21px; background: #b5b5b5; flex: none; margin-right: -2px; }
  .more { font-size: 12px; line-height: 10px; color: #222; align-self: flex-start; margin-top: 3px; }

  .title { height: 23px; flex: none; background: #fff; display: flex; align-items: center; position: relative; }
  .tlogo { display: flex; margin-left: 2px; transform: translateY(-1px); }
  .ttext { margin-left: 4px; font-size: 12.8px; color: #555; white-space: nowrap; }
  .wins { position: absolute; left: 1243px; top: 6px; display: flex; gap: 34px; }

  .menu { height: 31px; flex: none; display: flex; align-items: center; padding-left: 7px; }
  .mitems { display: flex; gap: 10.2px; white-space: nowrap; }
  .mtool { display: flex; align-items: center; gap: 5px; margin-left: 7px; white-space: nowrap; }
  .mtool .caret { margin-left: -2px; }
  .xiao { margin-left: 11px; gap: 4px; }
  .mblank { width: 186px; height: 26px; margin-left: 8px; background: #f8f8f8; border-radius: 4px; flex: none; }
  .muser { width: 218px; margin-left: 2px; height: 26px; display: flex; align-items: center; padding-left: 3px; gap: 5px; background: #f8f8f8; border-radius: 4px; box-sizing: border-box; flex: none; }
  .muser .caret { margin-left: 3px; }
  .dou { margin: 0 6px 0 5px; }
  .menu > .more { margin-left: 8px; align-self: flex-start; margin-top: 6px; }

  .row1 { height: 30px; flex: none; display: flex; gap: 3px; }
  .bar { display: flex; align-items: center; background: linear-gradient(#fff, #ebebeb); border-radius: 4px; box-sizing: border-box; }
  .bar.a { width: 150px; padding-left: 4px; margin-bottom: 2px; gap: 8px; }
  .bar.a .caret { margin: 0 -2px 0 -2px; }
  .bar.a .sep { margin: 0 1px; }
  .bar.a .more { margin-left: 14px; }
  .bar.b { width: 545px; padding-left: 5px; margin-bottom: 2px; gap: 7.8px; position: relative; }
  .bar.b .more { position: absolute; right: 2px; top: 2px; margin: 0; }
  .bar.c { width: 662px; padding-left: 5px; margin-bottom: 2px; gap: 8px; position: relative; }
  .bar.c .more { position: absolute; right: 3px; top: 2px; margin: 0; }
  .bar.c .sep { margin: 0 -2px 0 -1px; }
  .bar.c .tool { gap: 4px; }
  .bar.c .tool .caret { margin-left: 2px; }
  .tool { display: flex; align-items: center; gap: 4.5px; white-space: nowrap; flex: none; }
  .tool.grey { color: #8c8c8c; }
  .tool .caret { margin-left: 3px; }
  .dd { width: 61px; height: 23px; box-sizing: border-box; border: 1px solid #808080; display: flex; align-items: center; padding-left: 2px; gap: 3px; color: #8c8c8c; flex: none; margin-right: -3px; white-space: nowrap; }
  .sq { width: 13px; height: 13px; background: #e4e4e4; border: 1px solid #c4c4c4; flex: none; }
  .dd .caret { margin-left: 7px; border-top-color: #777; }

  .work { flex: 1; display: flex; min-height: 0; }
  .nav { width: 165px; flex: none; display: flex; flex-direction: column; gap: 1px; }
  .navhead { height: 13px; border: 1px solid #9c9c9c; background: #f0f0f0; display: flex; justify-content: space-between; align-items: center; font-size: 12.5px; }
  .navbtns { display: flex; gap: 9px; align-items: center; padding-right: 4px; }
  .navbtn { height: 22px; flex: none; border: 1px solid #a8a8a8; box-sizing: border-box; background: #f0f0f0; display: flex; align-items: center; justify-content: center; font-size: 12px; padding-top: 1px; }
  .navbtn.last { margin-top: -1px; }
  .pm { height: 27px; flex: none; background: #fff; display: flex; align-items: center; gap: 7px; padding-left: 5px; margin: -1px 2px -1px 2px; border-left: 1px solid #a8a8a8; border-right: 1px solid #a8a8a8; }
  .treebox { flex: 1; min-height: 0; display: flex; margin: 0 2px 2px 2px; border: 1px solid #8f8f8f; background: #fff; overflow: hidden; position: relative; }
  .tree { flex: 1; padding-top: 2px; overflow: hidden; min-width: 0; }
  .row { height: 16px; display: flex; align-items: center; position: relative; white-space: nowrap; padding-left: 42px; }
  .child::before { content: ""; position: absolute; left: 31px; top: 0; bottom: 0; border-left: 1px dotted #555; }
  .child.lastc::before { bottom: 8px; }
  .child::after { content: ""; position: absolute; left: 32px; width: 9px; top: 8px; border-top: 1px dotted #555; }
  .clabel { margin-left: 5px; }
  .root { padding-left: 23px; }
  .dot { width: 5px; border-top: 1px dotted #555; position: absolute; left: 18px; top: 8px; }
  .rlabel { margin-left: 6px; }
  .chev { width: 6px; height: 6px; border-right: 1.500px solid #666; border-bottom: 1.500px solid #666; position: absolute; left: 9px; top: 3px; transform: rotate(45deg); }
  .chev.closed { transform: rotate(-45deg); border-color: #aaa; top: 5px; left: 7px; }
  .sel { background: linear-gradient(#d6d6d6, #d6d6d6) 40px 0 / 81px 16px no-repeat; }

  .scroll { width: 15px; flex: none; background: #f0f0f0; position: relative; }
  .ar { position: absolute; left: 4px; width: 5px; height: 5px; border-left: 1.500px solid #666; border-top: 1.500px solid #666; }
  .ar.up { top: 9px; transform: rotate(45deg); }
  .ar.down { bottom: 8px; transform: rotate(225deg); }
  .thumb { position: absolute; left: 0; right: 0; background: #cdcdcd; }
  .ts { margin-right: 1px; }
  .ts .thumb { top: 153px; height: 270px; }
  .ls .thumb { bottom: 19px; height: 27px; }
  .ds { margin-left: 5px; margin-right: 2px; }
  .ds .thumb { top: 182px; height: 195px; }
  .ds .ar.up { top: 8px; }

  .mid { flex: 1; min-width: 0; display: flex; flex-direction: column; margin-left: 7px; }
  .row2 { height: 27px; flex: none; padding-left: 3px; gap: 8px; margin-top: 1px; }
  .row2 .tool { gap: 5px; }
  .row2 .tool .caret { margin-left: -3px; }
  .row2 .sep { margin-right: -4px; }
  .flo { margin-left: -2px; flex: none; }
  .combo { width: 61px; height: 23px; background: #fff; display: flex; align-items: center; padding-left: 2px; box-sizing: border-box; gap: 14px; flex: none; margin-left: -3px; margin-right: -3px; }
  .midbody { flex: 1; display: flex; min-height: 0; margin-top: 4px; }
  .list { width: 183px; flex: none; display: flex; flex-direction: column; }
  .search { height: 26px; display: flex; flex: none; }
  .sinput { width: 157px; box-sizing: border-box; height: 25px; background: #fff; border: 1px solid #808080; color: #8a8a8a; display: flex; align-items: center; padding-left: 2px; font-size: 13px; }
  .sbtn { width: 24px; margin-left: 1px; display: flex; justify-content: center; align-items: center; }
  .listbox { flex: 1; display: flex; border: 1px solid #999; background: #fff; min-height: 0; margin: 0 0 1px 0; position: relative; }
  .items { flex: 1; display: flex; flex-direction: column; }
  .item { height: 16px; display: flex; align-items: center; position: relative; padding-left: 40px; gap: 6px; flex: none; }
  .item .chev { left: 27px; top: 3px; }
  .item .dot { left: 36px; }
  .item.first { margin-top: 2px; }
  .spacer { flex: 1; }
  .item.sub { padding-left: 59px; margin-bottom: 16px; }
  .elbow { position: absolute; left: 49px; top: -8px; width: 9px; height: 16px; border-left: 1px dotted #555; border-bottom: 1px dotted #555; box-sizing: border-box; }
  .subl { margin-left: 1px; }
  .ls { margin-right: 2px; }

  .props { flex: 1; margin-left: 4px; margin-right: 6px; margin-top: -1px; display: flex; flex-direction: column; background: #fff; min-width: 0; }
  .tabline { height: 21px; border-bottom: 1px solid #c8c8c8; flex: none; }
  .tab { display: inline-flex; align-items: center; justify-content: center; width: 62px; height: 21px; box-sizing: border-box; background: #fff; border: 1px solid #c8c8c8; border-bottom: 0; }
  .table { flex: 1; margin: 3px 0 1px 3px; border: 1px solid #a8a8a8; background: #fff; box-sizing: border-box; }
  .thead { display: flex; height: 19px; }
  .th { display: flex; align-items: center; justify-content: center; border-right: 1px solid #bcbcbc; box-sizing: border-box; flex: none; background: #fafafa; }
  .c0 { width: 23px; }
  .c1 { width: 190px; }
  .c2 { width: 127px; background: linear-gradient(#fbdc9f, #e9b86a); color: #4a0a6a; }
  .c3 { width: 30px; }

  .status { height: 21px; flex: none; margin-top: 1px; display: flex; gap: 2px; background: #f0f0f0; }
  .status span[class^="s"] { background: #fbfbfb; display: flex; align-items: center; padding: 2px 0 0 2px; box-sizing: border-box; white-space: nowrap; }
  .s0 { width: 148px; } .s1 { width: 78px; } .s2 { width: 96px; } .s3 { width: 50px; } .s4 { width: 915px; } .s5 { flex: 1; }

  .taskbar { height: 40px; flex: none; margin-top: 1px; display: flex; align-items: center; background: #04131b; color: #eee; position: relative; }
  .start { width: 48px; height: 40px; background: #000; display: flex; align-items: center; justify-content: center; flex: none; }
  .tsearch { width: 344px; height: 40px; background: #333; display: flex; align-items: center; padding-left: 9px; box-sizing: border-box; flex: none; position: relative; }
  .tstext { margin-left: 5px; font-size: 14px; color: #8a8a8a; }
  .mic { position: absolute; right: 14px; top: 10px; }
  .big { width: 50px; height: 40px; display: flex; align-items: center; justify-content: center; flex: none; }
  .apps { display: flex; margin-left: 4px; }
  .app { width: 38px; height: 40px; display: flex; align-items: center; justify-content: center; position: relative; box-sizing: border-box; }
  .app.on::after { content: ""; position: absolute; left: 4px; right: 4px; bottom: 0; height: 2px; background: #76b9ed; }
  .active { background: #3a4347; }
  .active.on::after { left: 0; right: 0; }
  .qq { background: #8a5220; }
  .qq::after { content: ""; position: absolute; left: 0; right: 0; bottom: 0; height: 2px; background: #f07000; }
  .link { margin-left: 11px; font-size: 12.500px; flex: none; width: 26px; }
  .cpu { width: 60px; margin-left: 11px; display: flex; flex-direction: column; align-items: center; font-size: 12px; gap: 2px; flex: none; line-height: 15px; }
  .tray { display: flex; align-items: center; gap: 8px; margin-left: 14px; flex: none; }
  .vol { margin-left: -5px; }
  .kbd { margin-left: -1px; }
  .zh { font-size: 14px; margin-left: 2px; }
  .tS { width: 13px; height: 17px; background: #ef4a1e; border-radius: 3px; transform: rotate(8deg); color: #fff; font: 700 13px/17px "Liberation Sans", sans-serif; text-align: center; margin-left: 7px; }
  .clock { width: 66px; display: flex; flex-direction: column; align-items: center; gap: 3px; font-size: 12.500px; line-height: 15px; flex: none; }
  .notify { flex: 1; height: 40px; background: #000; display: flex; align-items: center; justify-content: center; padding-left: 6px; }

  .back { position: absolute; left: 778px; top: 158px; width: 566px; height: 545px; box-sizing: border-box; border: 1px solid #555; background: #d9e5f2; display: flex; flex-direction: column; }
  .btitle { height: 30px; flex: none; background: linear-gradient(#b7c8d8, #dbe6f3); display: flex; align-items: center; padding-left: 20px; color: #888; padding-top: 7px; box-sizing: border-box; }
  .binner { margin: 0 6px 9px 6px; flex: 1; background: #efefef; display: flex; flex-direction: column; border-right: 1px solid #bbb; border-bottom: 1px solid #999; }
  .radios { height: 33px; flex: none; position: relative; border-bottom: 1px solid #a8a8a8; box-sizing: border-box; }
  .radio { position: absolute; top: 9px; display: flex; align-items: center; gap: 3px; }
  .radio:first-child { left: 85px; }
  .radio:last-child { left: 312px; }
  .radio i { width: 11px; height: 11px; border-radius: 50%; border: 1px solid #555; background: #fff; position: relative; }
  .radio.on i::after { content: ""; position: absolute; left: 2px; top: 2px; width: 7px; height: 7px; border-radius: 50%; background: #333; }
  .cad, .card { display: block; background: #000; }
  .bfoot { flex: 1; display: flex; justify-content: flex-end; align-items: flex-start; padding: 13px 26px 0 0; }

  .w { stroke: #fff; fill: none; stroke-width: 1; }
  .geo { shape-rendering: geometricPrecision; }
  .rd { stroke: #f00; fill: none; stroke-width: 2; }
  .thin { stroke-width: 1.5; }
  .mg { stroke: #f0f; fill: none; stroke-width: 2; }
  .yl { stroke: #ff0; fill: none; stroke-width: 2; }
  .cy { stroke: #0ff; fill: none; stroke-width: 2; }
  .gn { stroke: #0f0; fill: none; stroke-width: 2; }
  .dots { stroke-width: 1; stroke-dasharray: 1.500 6; }
  .lb, .gt, .lb11, .gt11, .num, .t18, .n18, .big-t, .cap-t, .cap-s { shape-rendering: auto; }
  .lb { fill: #e8e8e8; font-size: 8.500px; }
  .gt { fill: #0d0; font-size: 8.500px; font-family: "Liberation Mono", monospace; }
  .gt.r { font-size: 9.500px; }
  .lb11 { fill: #e8e8e8; font-size: 10px; }
  .gt11 { fill: #0d0; font-size: 10px; font-family: "Liberation Mono", monospace; }
  .num { fill: #f4f4f4; font: 21px "Liberation Serif", serif; }
  .sp { letter-spacing: 1px; }
  .n18 { fill: #f4f4f4; font: 19px "Liberation Serif", serif; letter-spacing: 1.500px; }
  .t18 { fill: #f0f0f0; font-size: 19px; }
  .big-t { fill: #f4f4f4; font-size: 21px; }
  .cap-t { fill: #fff; font-size: 17.500px; font-weight: 700; }
  .cap-s { fill: #fff; font-size: 13.500px; }

  .dialog { position: absolute; left: 164px; top: 156px; width: 636px; height: 502px; box-sizing: border-box; border: 1px solid #4aa0e0; background: #f0f0f0; display: flex; flex-direction: column; box-shadow: 0 3px 18px rgba(0, 0, 0, .45); }
  .dtitle { height: 31px; flex: none; background: #fff; display: flex; align-items: center; gap: 4px; padding-left: 7px; position: relative; }
  .dlogo { display: flex; }
  .dwins { position: absolute; left: 514px; top: 9px; display: flex; align-items: center; gap: 32px; }
  .dclose { margin-left: 2px; }
  .dbody { height: 422px; flex: none; display: flex; padding-left: 3px; overflow: hidden; border-bottom: 1px solid #8e8e8e; box-sizing: content-box; }
  .cards { width: 609px; flex: none; display: grid; grid-template-columns: 302px 302px; grid-template-rows: 61px 205px 146px; gap: 5px; background: #f0f0f0; }
  .picked { background: #000; border: 3px solid #f00; box-sizing: border-box; width: 302px; height: 205px; overflow: hidden; }
  .picked svg { display: block; }
  .dfoot { flex: 1; display: flex; justify-content: flex-end; gap: 16px; padding: 12px 33px 0 0; }
  .btn { height: 24px; display: flex; align-items: center; justify-content: center; background: #e1e1e1; box-sizing: border-box; border: 1px solid #adadad; flex: none; }
  .primary { border: 2px solid #0a74d0; width: 73px; }
  .ok { width: 88px; }
  .cancel { width: 89px; }

  .circle { position: absolute; left: 0; top: 0; pointer-events: none; }

  .badge { position: absolute; left: 962px; top: -29px; width: 50px; height: 50px; box-sizing: border-box; border-radius: 50%; background: #47b54a; border: 2px solid #d8e0d8; box-shadow: 0 3px 6px rgba(0, 0, 0, .35); display: flex; align-items: flex-end; justify-content: center; padding: 0 4px 5px 0; color: #fff; font: 700 12px "Liberation Sans", sans-serif; }

  .sogou { position: absolute; left: 703px; top: 3px; width: 205px; height: 23px; box-sizing: border-box; background: #fff; border: 1px solid #b7cfe2; display: flex; align-items: center; gap: 7px; padding-left: 30px; }
  .slogo { position: absolute; left: -1px; top: -2px; width: 25px; height: 26px; border-radius: 6px; background: #ef5a1e; color: #fff; font: 700 24px/26px "Liberation Sans", sans-serif; text-align: center; transform: rotate(-8deg); }
  .szh { color: #1f6fc4; font-size: 14px; }
  .spunct { color: #1f6fc4; font: 700 14px "Liberation Sans", sans-serif; width: 14px; }
</style>
